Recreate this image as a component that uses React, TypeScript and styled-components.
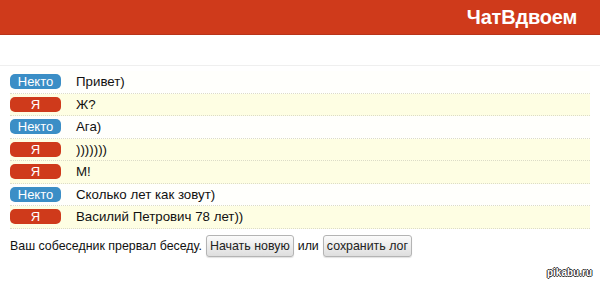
import React from "react";
import styled, { createGlobalStyle } from "styled-components";

const GlobalStyle = createGlobalStyle`
  body {
    margin: 0;
    background: #fff;
    font-family: "Liberation Sans", Arial, sans-serif;
    color: #111;
  }
`;

const Page = styled.div`
  position: relative;
  width: 600px;
  height: 283px;
  overflow: hidden;
`;

const Header = styled.div`
  height: 34px;
  background: #cf3a1b;
  border-bottom: 1px solid #b8341a;
  display: flex;
  justify-content: flex-end;
  align-items: center;
  padding-right: 23px;
`;

const Title = styled.div`
  color: #fff;
  font-size: 20px;
  font-weight: bold;
  letter-spacing: -0.2px;
`;

const Log = styled.div`
  margin-top: 30px;
  border-top: 1px solid #efefef;
  padding: 5px 10px 0;
`;

const Row = styled.div<{ $mine: boolean }>`
  display: flex;
  align-items: center;
  height: 21.5px;
  border-bottom: 1px dotted #dcdcc8;
  background: ${({ $mine }) => ($mine ? "#fefee3" : "#fffffc")};
  font-size: 13.3px;
`;

const Badge = styled.span<{ $mine: boolean }>`
  flex: none;
  width: 51px;
  height: 15px;
  line-height: 15px;
  border-radius: 5px;
  text-align: center;
  color: #fff;
  font-size: 13px;
  background: ${({ $mine }) => ($mine ? "#cf3a1b" : "#3b8ec6")};
  margin-right: 15px;
`;

const Footer = styled.div`
  display: flex;
  align-items: center;
  gap: 4px;
  padding: 6px 10px 0;
  font-size: 12.4px;
`;

const Button = styled.button`
  height: 22px;
  padding: 0 3px;
  font-family: "Liberation Sans", Arial, sans-serif;
  font-size: 12.4px;
  color: #222;
  border: 1px solid #b4b4b4;
  border-radius: 3px;
  background: linear-gradient(#fbfbfb, #dedede);
  box-shadow: 0 1px 1px rgba(0, 0, 0, 0.12);
`;

const Watermark = styled.div`
  position: absolute;
  right: 8px;
  bottom: 5px;
  font-size: 10px;
  font-weight: bold;
  color: #fff;
  text-shadow: -1px 0 #333, 1px 0 #333, 0 -1px #333, 0 1px #333;
`;

const messages: { mine: boolean; text: string }[] = [
  { mine: false, text: "Привет)" },
  { mine: true, text: "Ж?" },
  { mine: false, text: "Ага)" },
  { mine: true, text: ")))))))" },
  { mine: true, text: "М!" },
  { mine: false, text: "Сколько лет как зовут)" },
  { mine: true, text: "Василий Петрович 78 лет))" },
];

export default function App() {
  return (
    <Page>
      <GlobalStyle />
      <Header>
        <Title>ЧатВдвоем</Title>
      </Header>
      <Log>
        {messages.map((m, i) => (
          <Row key={i} $mine={m.mine}>
            <Badge $mine={m.mine}>{m.mine ? "Я" : "Некто"}</Badge>
            {m.text}
          </Row>
        ))}
      </Log>
      <Footer>
        Ваш собеседник прервал беседу.
        <Button>Начать новую</Button>
        или
        <Button>сохранить лог</Button>
      </Footer>
      <Watermark>pikabu.ru</Watermark>
    </Page>
  );
}
